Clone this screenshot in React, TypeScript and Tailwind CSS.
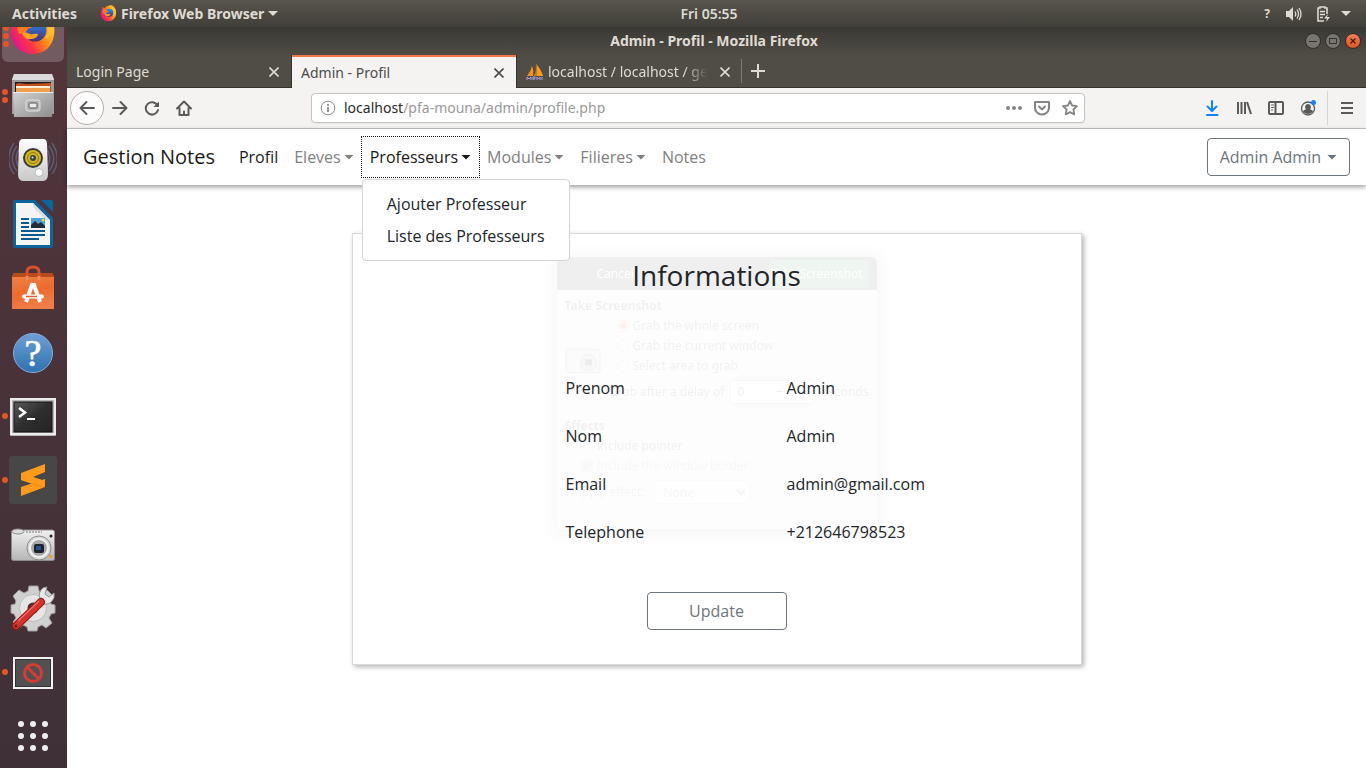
import type { ReactNode } from "react";

const UI_FONT = "font-['Noto_Sans','Open_Sans',sans-serif]";

function Firefox({ className }: { className: string }) {
  return (
    <svg viewBox="0 0 48 48" className={className} aria-hidden="true">
      <defs>
        <linearGradient id="fxBody" x1="0.95" y1="0.25" x2="0.1" y2="0.8">
          <stop offset="0" stopColor="#ffd52a" />
          <stop offset="0.4" stopColor="#ff8a16" />
          <stop offset="0.7" stopColor="#ff3647" />
          <stop offset="1" stopColor="#e31587" />
        </linearGradient>
        <linearGradient id="fxGlobe" x1="0" y1="0" x2="0" y2="1">
          <stop offset="0" stopColor="#0a9df0" />
          <stop offset="0.5" stopColor="#3a5fb8" />
          <stop offset="1" stopColor="#4a2f78" />
        </linearGradient>
      </defs>
      <path
        d="M5 14c0-4 1-7 2-9 2 1 4 3 5 4 4-3 6-5 10-6 4-2 8-2 8-2 8 2 10 5 12 10 3 3 4 10 3 16-1 11-10 19-21 19S3 38 2 27c-.5-5 .5-9 3-13z"
        fill="url(#fxBody)"
      />
      <circle cx="26" cy="22" r="11.500" fill="url(#fxGlobe)" />
      <path d="M7 16c3-5 7-6 10-5 0 3 1 4 3 5 2 0 4 1 4 2-1 2-4 2-5 3l-3 4-6 1z" fill="#ff7a1e" />
      <path d="M13 25c3-1 6 0 8 1 3 1 5-1 8 0 0 3-4 5-8 5-3 1-6-1-8-6z" fill="#ffa21c" />
      <path d="M30 1c6 5 9 10 9 17 1 5-1 10-4 13 7-2 11-8 10-15C43 9 38 3 30 1z" fill="#ffbd2b" />
    </svg>
  );
}

function Icon({ children }: { children: ReactNode }) {
  return (
    <svg viewBox="0 0 48 48" className="size-12 shrink-0" aria-hidden="true">
      {children}
    </svg>
  );
}

const files = (
  <Icon>
    <defs>
      <linearGradient id="metal" x1="0" y1="0" x2="1" y2="1">
        <stop offset="0" stopColor="#d2d2d2" />
        <stop offset="1" stopColor="#8d8d8d" />
      </linearGradient>
    </defs>
    <path d="M5 2h38l2 5v35H3V7z" fill="#9c9c9c" />
    <path d="M5 2h38l2 6H3z" fill="#dadada" />
    <path d="M6 10h36v10H6z" fill="#1e1e1e" />
    <path d="M9 11l9 1 24-1v9H7v-8z" fill="#c4501b" />
    <path d="M7 14h34v3H7z" fill="#fff0d8" />
    <path d="M7 16h34v4H7z" fill="#eea04c" />
    <path d="M4 20h40l-1 25H5z" fill="url(#metal)" />
    <path d="M4 20h40v1H4z" fill="#ededed" />
    <rect x="17" y="28" width="14" height="11" rx="2" fill="#b7b7b7" stroke="#e2e2e2" />
    <rect x="20" y="31" width="8" height="5" rx="1" fill="#ececec" stroke="#555" />
  </Icon>
);

const rhythmbox = (
  <Icon>
    <defs>
      <linearGradient id="speaker" x1="0" y1="0" x2="0" y2="1">
        <stop offset="0" stopColor="#fff" />
        <stop offset="1" stopColor="#c9c9c9" />
      </linearGradient>
    </defs>
    <g fill="none" stroke="#6d83b4" strokeWidth="1.500" opacity="0.5">
      <path d="M8 10C2 18 2 27 8 35M40 10c6 8 6 17 0 25" />
      <path d="M5 7C-2 17-2 29 5 38M43 7c7 10 7 22 0 31M11 12c-5 7-5 14 0 21M37 12c5 7 5 14 0 21" />
    </g>
    <path d="M14 3h20q4 0 4 5l1 30q0 7-5 7H14q-5 0-5-7l1-30q0-5 4-5z" fill="url(#speaker)" />
    <circle cx="24" cy="22" r="10" fill="#3a3a38" />
    <circle cx="24" cy="22" r="8" fill="#d2b71e" />
    <circle cx="24" cy="22" r="5.500" fill="none" stroke="#8c7a12" />
    <circle cx="24" cy="22" r="3" fill="#35424c" />
    <circle cx="23.500" cy="21.500" r="1" fill="#d9e4ec" />
    <circle cx="30" cy="36.500" r="4" fill="#fafafa" stroke="#b9b9b9" />
    <path d="M15 35h3v4h-3z" fill="none" stroke="#ccc" />
  </Icon>
);

const writer = (
  <Icon>
    <path d="M6 0h20l18 18v28q0 2-2 2H6q-2 0-2-2V2q0-2 2-2z" fill="#0f639c" />
    <path d="M32 0h10q2 0 2 2v10z" fill="#0369a3" />
    <path d="M7 3h17l17 17v25H7z" fill="#f4f4f4" />
    <path d="M24 3l17 17h-4L24 7z" fill="#d7dde2" />
    <path d="M12 19h8M12 23h8M12 27h8M12 31h24M12 35h24M12 39h18" stroke="#0b5a90" strokeWidth="2" />
    <rect x="22" y="18" width="14" height="10" fill="#4aa3d6" />
    <path d="M22 28v-3l4-4 3 3 3-2 4 4v2z" fill="#1e2d38" />
    <circle cx="34" cy="20" r="1.500" fill="#f4d24a" />
  </Icon>
);

const software = (
  <Icon>
    <defs>
      <linearGradient id="bag" x1="0" y1="0" x2="0.3" y2="1">
        <stop offset="0" stopColor="#e98a4b" />
        <stop offset="0.6" stopColor="#ee6a2c" />
        <stop offset="1" stopColor="#ef7d47" />
      </linearGradient>
    </defs>
    <path d="M5 9h38l2 4v32H3V13z" fill="url(#bag)" />
    <path d="M5 9h38l2 4H3z" fill="#b94a1b" />
    <path d="M18 15V8q0-5 6-5t6 5v7" fill="none" stroke="#d9512a" strokeWidth="3" />
    <path d="M18 12v4M30 12v4" stroke="#f08a5c" strokeWidth="3" />
    <path d="M17 38l6-17h2l6 17" fill="none" stroke="#fff" strokeWidth="4" />
    <path d="M15 32.500h18" stroke="#fff" strokeWidth="4" strokeLinecap="round" />
    <path d="M17 32.500h11" stroke="#e4602a" strokeWidth="1.500" />
  </Icon>
);

const help = (
  <Icon>
    <defs>
      <linearGradient id="helpFill" x1="0" y1="0" x2="0" y2="1">
        <stop offset="0" stopColor="#6f9fd6" />
        <stop offset="1" stopColor="#2d72ae" />
      </linearGradient>
    </defs>
    <circle cx="24" cy="25" r="19.500" fill="url(#helpFill)" stroke="#88aed9" />
    <text x="24" y="38" textAnchor="middle" fontSize="38" fontFamily="Liberation Serif, serif" fill="#fff" stroke="#fff" strokeWidth="0.700">
      ?
    </text>
  </Icon>
);

const terminal = (
  <Icon>
    <defs>
      <linearGradient id="screen" x1="0" y1="0" x2="1" y2="1">
        <stop offset="0" stopColor="#5a5a5a" />
        <stop offset="0.5" stopColor="#2e2e2e" />
        <stop offset="1" stopColor="#242424" />
      </linearGradient>
    </defs>
    <rect x="1" y="6" width="46" height="38" rx="1" fill="#b5b5b5" />
    <rect x="2" y="7" width="44" height="35" fill="none" stroke="#ececec" strokeWidth="2" />
    <rect x="5" y="10" width="38" height="30" fill="url(#screen)" stroke="#111" />
    <path d="M10 16l6 4.500-6 4.500" fill="none" stroke="#fff" strokeWidth="2.500" />
    <path d="M18 27h8" stroke="#fff" strokeWidth="2" />
  </Icon>
);

const sublime = (
  <Icon>
    <rect width="48" height="48" rx="3" fill="#474747" />
    <path d="M12 31l24-8v8l-24 9z" fill="#ff9a1c" />
    <path d="M12 17l12 4 12 4v5l-4 1-20-7z" fill="#e07f0c" />
    <path d="M12 17l24-9v8l-12 5 12 4v4l-2 2-22-7z" fill="#ff9a1c" />
  </Icon>
);

const camera = (
  <Icon>
    <defs>
      <linearGradient id="cam" x1="0" y1="0" x2="0" y2="1">
        <stop offset="0" stopColor="#f1f1f1" />
        <stop offset="1" stopColor="#b5b5b5" />
      </linearGradient>
    </defs>
    <rect x="2.500" y="10" width="43" height="30.500" rx="2" fill="url(#cam)" stroke="#8c8c8c" />
    <ellipse cx="9" cy="11.500" rx="6" ry="2.500" fill="#ddd" stroke="#888" />
    <path d="M17 12h16" stroke="#777" strokeDasharray="2 1" />
    <circle cx="30" cy="28" r="12" fill="#d9d9d9" stroke="#8a8a8a" />
    <circle cx="30" cy="28" r="9" fill="#a9a9a9" stroke="#f2f2f2" strokeWidth="2" />
    <rect x="25" y="24" width="10" height="9" rx="2" fill="#1c232d" />
    <rect x="27" y="26" width="5" height="4" fill="#24518f" />
    <circle cx="42" cy="16" r="1.500" fill="#222" />
    <rect x="40" y="35" width="3" height="3" fill="#efa12c" />
  </Icon>
);

const settings = (
  <Icon>
    <path
      d="M20 2h9l1 5 4 2 4-3 6 6-3 5 1 3 4 1v8l-4 1-2 4 3 5-6 5-4-3-4 2-1 4h-9l-1-4-4-2-4 3-6-6 3-4-2-4-3-1v-8l4-1 1-3-3-5 6-6 5 3 4-2z"
      fill="#d0d0d0"
      stroke="#9d9d9d"
    />
    <circle cx="24" cy="24" r="13.500" fill="#e6e6e6" stroke="#bdbdbd" />
    <circle cx="24" cy="24" r="5.500" fill="#493339" />
    <path d="M33 17q-5-5-1-11 2-3 6-3l-2 7 4 3 5-4q1 5-2 8-3 4-9 3z" fill="#e9e9e9" stroke="#969696" />
    <path d="M7 42L32 18" stroke="#8d1813" strokeWidth="8" strokeLinecap="round" />
    <path d="M7 42L32 18" stroke="#d8322c" strokeWidth="6" strokeLinecap="round" />
    <path d="M9 37L30 17" stroke="#ef6d63" strokeWidth="1.500" />
    <circle cx="7" cy="42" r="1.500" fill="#6b1713" />
  </Icon>
);

const blocked = (
  <Icon>
    <rect x="4" y="9" width="40" height="32" fill="#f2f2f2" />
    <rect x="6.500" y="11.500" width="35" height="27" fill="#515151" stroke="#333" />
    <circle cx="24" cy="25" r="8.500" fill="none" stroke="#d83a34" strokeWidth="3" />
    <path d="M18 19l12 12" stroke="#d83a34" strokeWidth="3" />
  </Icon>
);

const grid = (
  <Icon>
    {[12, 24, 36].map((y) => [12, 24, 36].map((x) => <circle key={x + "-" + y} cx={x} cy={y} r="3" fill="#eee" />))}
  </Icon>
);

const dockItems = [
  { name: "Files", icon: files, dots: 2 },
  { name: "Rhythmbox", icon: rhythmbox, dots: 0 },
  { name: "Writer", icon: writer, dots: 0 },
  { name: "Software", icon: software, dots: 0 },
  { name: "Help", icon: help, dots: 0 },
  { name: "Terminal", icon: terminal, dots: 1 },
  { name: "Sublime Text", icon: sublime, dots: 1 },
  { name: "Screenshot", icon: camera, dots: 0 },
  { name: "Settings", icon: settings, dots: 0 },
  { name: "Blocked window", icon: blocked, dots: 1 },
  { name: "Show applications", icon: grid, dots: 0 },
];

function Dots({ count }: { count: number }) {
  return (
    <span className="flex w-[9px] shrink-0 flex-col items-center gap-0.5 pl-px">
      {Array.from({ length: count }, (_, i) => (
        <span key={i} className="size-1.5 rounded-full bg-[#e95420]" />
      ))}
    </span>
  );
}

function Dock() {
  return (
    <nav aria-label="Dock" className="flex w-[67px] shrink-0 flex-col bg-linear-to-b from-[#52353b] to-[#3f3037]">
      <div className="flex h-[37px] flex-col justify-end overflow-hidden">
        <button aria-label="Firefox" className="flex h-16 shrink-0 items-center py-0.5">
          <span className="mr-[3px] ml-0.5 flex h-full flex-1 items-center rounded-md bg-[#735c61]">
            <span className="flex w-[7px] flex-col items-center gap-0.5">
              {[0, 1, 2, 3].map((i) => (
                <span key={i} className="size-1.5 rounded-full bg-[#e95420]" />
              ))}
            </span>
            <Firefox className="size-12 shrink-0" />
          </span>
        </button>
      </div>
      {dockItems.map((item) => (
        <button key={item.name} aria-label={item.name} className="flex h-16 shrink-0 items-center">
          <Dots count={item.dots} />
          {item.icon}
        </button>
      ))}
    </nav>
  );
}

function SystemBar() {
  return (
    <header className="flex h-[27px] items-center bg-linear-to-b from-[#57554d] to-[#413f39] text-sm font-bold whitespace-nowrap text-[#dfdbd2]">
      <div className="flex grow basis-[67px] items-center pl-3">
        <button className="w-[88px] text-left">Activities</button>
        <button className="flex items-center gap-1">
          <Firefox className="size-[17px]" />
          Firefox Web Browser
          <svg viewBox="0 0 10 5" className="h-[5px] w-2.5" aria-hidden="true">
            <path d="M0 0h10L5 5z" fill="currentColor" />
          </svg>
        </button>
      </div>
      <span className="font-semibold">Fri 05:55</span>
      <div className="flex grow basis-0 items-center justify-end gap-2.5 pr-[15px]">
        <span className="mr-1.5 text-xs">?</span>
        <svg viewBox="0 0 16 14" className="mr-1 h-3.5 w-4" aria-label="Volume">
          <path d="M0 4h3l4-4v14L3 10H0z" fill="currentColor" />
          <path d="M9 4.500q1.500 2.500 0 5M11 2.500q3 4.500 0 9M13 1q4 6 0 12" fill="none" stroke="currentColor" strokeWidth="1.300" />
        </svg>
        <svg viewBox="0 0 15 16" className="h-4 w-[15px]" aria-label="Battery">
          <path d="M8 15H2V2h2V1h5v1h2v6M4 5.500h5M4 8.500h5M4 11.500h3" fill="none" stroke="currentColor" strokeWidth="1.600" />
          <path d="M12 8l-4 4.500h3l-1 3.500 4-5h-3z" fill="currentColor" />
        </svg>
        <svg viewBox="0 0 10 5" className="h-[5px] w-2.5" aria-hidden="true">
          <path d="M0 0h10L5 5z" fill="currentColor" />
        </svg>
      </div>
    </header>
  );
}

function TitleBar() {
  const dot = "flex size-4 items-center justify-center rounded-full border border-[#2e2d29]";
  return (
    <div className="flex h-7 items-center bg-linear-to-b from-[#3a3934] to-[#4f4c45] text-sm font-bold text-[#dfdbd2]">
      <div className="grow basis-0" />
      <h1>Admin - Profil - Mozilla Firefox</h1>
      <div className="flex grow basis-0 items-center justify-end gap-1 pr-[5px]">
        <button aria-label="Minimize" className={dot + " bg-[#77756e]"}>
          <svg viewBox="0 0 8 8" className="size-2"><path d="M0 4.500h8" stroke="#33322e" /></svg>
        </button>
        <button aria-label="Maximize" className={dot + " bg-[#77756e]"}>
          <svg viewBox="0 0 8 8" className="size-2"><path d="M.5 1.500h7v5h-7z" fill="none" stroke="#33322e" /></svg>
        </button>
        <button aria-label="Close" className={dot + " bg-linear-to-b from-[#f37e5a] to-[#e2511d]"}>
          <svg viewBox="0 0 8 8" className="size-2"><path d="M1.500 1.500l5 5m0-5l-5 5" stroke="#4a1c0c" strokeWidth="1.300" /></svg>
        </button>
      </div>
    </div>
  );
}

function CloseTab() {
  return (
    <button aria-label="Close tab" className="shrink-0">
      <svg viewBox="0 0 10 10" className="size-2.5" aria-hidden="true">
        <path d="M.5.5l9 9m0-9l-9 9" stroke="currentColor" strokeWidth="1.600" />
      </svg>
    </button>
  );
}

function TabStrip() {
  const tab = "flex items-center justify-between pt-0.5 pr-3 pl-[9px]";
  return (
    <div className="flex h-[33px] items-stretch border-b border-[#33322e] bg-[#504d46] text-sm text-[#dfdbd2]">
      <div className={tab + " w-[225px] border-r border-[#33322e]"}>
        <span>Login Page</span>
        <CloseTab />
      </div>
      <div className={tab + " -mb-px w-56 bg-[#f4f3f2] text-[#4c4c4c] shadow-[inset_0_2px_#f07746]"}>
        <span>Admin - Profil</span>
        <CloseTab />
      </div>
      <div className={tab + " w-[225px] border-l border-[#33322e]"}>
        <svg viewBox="0 0 18 17" className="mr-1 h-[17px] w-[18px] shrink-0" aria-hidden="true">
          <path d="M1 12Q5 7 6 2q2 4 1 10z" fill="#f0912a" />
          <path d="M8 12q3-6 2-12 5 5 7 12z" fill="#f79c1e" />
          <path d="M10 1v11" stroke="#8a5a24" />
          <path d="M1 16v-3l2 2 2-2v3m2 0v-3h2v2h-2m4 1v-3l1.500 2 1.500-2v3m2 0v-3" fill="none" stroke="#a3a5d6" />
        </svg>
        <span className="mr-3 flex-1 mask-r-from-85% whitespace-nowrap">localhost / localhost / ge</span>
        <CloseTab />
      </div>
      <button aria-label="New tab" className="my-1 flex w-8 items-center justify-center border-l border-[#7d7a72]">
        <svg viewBox="0 0 14 14" className="size-3.5"><path d="M7 0v14M0 7h14" stroke="currentColor" strokeWidth="2" /></svg>
      </button>
    </div>
  );
}

function Tool({ label, children }: { label: string; children: ReactNode }) {
  return (
    <button aria-label={label} className="flex h-8 w-8 shrink-0 items-center justify-center">
      <Glyph>{children}</Glyph>
    </button>
  );
}

function Glyph({ children }: { children: ReactNode }) {
  return (
    <svg viewBox="0 0 16 16" className="size-4" fill="none" stroke="currentColor" strokeWidth="2" strokeLinecap="round" strokeLinejoin="round" aria-hidden="true">
      {children}
    </svg>
  );
}

function Toolbar() {
  return (
    <div className="flex h-[41px] items-center border-b border-[#c8c6c3] bg-[#f4f3f2] pr-[3px] pl-[3px] text-[#5a5a59]">
      <button aria-label="Back" className="flex size-[34px] shrink-0 items-center justify-center rounded-full border border-[#b0afad] bg-[#fcfcfc]">
        <Glyph><path d="M15 8H1.500M7.500 2l-6 6 6 6" /></Glyph>
      </button>
      <Tool label="Forward"><path d="M1 8h13.500M8.500 2l6 6-6 6" /></Tool>
      <Tool label="Reload">
        <path d="M13.500 5.500A6.200 6.200 0 1 0 14 10" />
        <path d="M15 1.500v5.500H9.500z" fill="currentColor" stroke="none" />
      </Tool>
      <Tool label="Home">
        <path d="M1 8.500l7-7 7 7M3.500 8v7h9V8M8 15v-3.500" />
      </Tool>
      <div className="mx-[111px] flex h-[30px] flex-1 items-center rounded-sm border border-[#c5c3c0] bg-white pr-1.5 pl-2 shadow-xs">
        <svg viewBox="0 0 16 16" className="mr-2 size-4 shrink-0 text-[#868685]" fill="none" stroke="currentColor" aria-hidden="true">
          <circle cx="8" cy="8" r="6.800" />
          <path d="M8 7v5M8 4v1.800" strokeWidth="1.800" />
        </svg>
        <span className="flex-1 text-sm text-[#9a9a9a]">
          <span className="text-[#2b2b2b]">localhost</span>/pfa-mouna/admin/profile.php
        </span>
        <div className="flex items-center gap-3 text-[#858584]">
          <button aria-label="Page actions">
            <Glyph>
              <g fill="currentColor" stroke="none">
                <circle cx="2" cy="8" r="2" /><circle cx="8" cy="8" r="2" /><circle cx="14" cy="8" r="2" />
              </g>
            </Glyph>
          </button>
          <button aria-label="Save to Pocket">
            <Glyph><path d="M1 2h14v6a7 6.500 0 0 1-14 0zM5 6.500l3 3 3-3" /></Glyph>
          </button>
          <button aria-label="Bookmark this page">
            <Glyph><path strokeWidth="1.800" d="M8 1l2.100 4.500 4.900.6-3.600 3.400.9 4.900L8 12l-4.300 2.400.9-4.900L1 6.100l4.900-.6z" /></Glyph>
          </button>
        </div>
      </div>
      <span className="flex text-[#0a84ff]">
        <Tool label="Downloads"><path d="M8 1v9.500M3.500 6.500L8 11l4.500-4.500M3 15h10.500" /></Tool>
      </span>
      <Tool label="Library"><path strokeLinecap="butt" d="M2 2v12M5.500 2v12M9 2v12M11 2l4 12" /></Tool>
      <Tool label="Sidebars"><path d="M2 2h12q1 0 1 1v10q0 1-1 1H2q-1 0-1-1V3q0-1 1-1zM7.500 2v12" /><path strokeWidth="1" d="M3.500 5h2M3.500 7.500h2M3.500 10h1" /></Tool>
      <Tool label="Account">
        <circle cx="8" cy="8.500" r="6.500" strokeWidth="1.300" />
        <path stroke="none" fill="currentColor" d="M8 4a3 3 0 0 1 2 5.200q3 .8 3 2.300-2 2.500-5 2.500t-5-2.500q0-1.500 3-2.300A3 3 0 0 1 8 4z" />
        <circle cx="13.500" cy="2.500" r="2.500" fill="#0a84ff" stroke="none" />
      </Tool>
      <span className="mx-[3px] h-[34px] w-px bg-[#d8d6d3]" />
      <Tool label="Menu"><path strokeLinecap="butt" d="M2 3h12M2 8h12M2 13h12" /></Tool>
    </div>
  );
}

function Caret() {
  return (
    <svg viewBox="0 0 10 5" className="h-[5px] w-2.5" aria-hidden="true">
      <path d="M.5 0h9L5 4.600z" fill="currentColor" />
    </svg>
  );
}

function SiteNav() {
  const link = "flex h-10 items-center gap-[3px] px-2";
  const muted = " text-[#808080]";
  return (
    <nav aria-label="Site" className="relative z-20 flex h-14 items-center bg-white px-4 shadow-[0_2px_5px_rgba(0,0,0,0.4)]">
      <a href="#" className="mr-4 text-xl text-[#191919]">Gestion Notes</a>
      <a href="#" className={link + " text-[#191919]"}>Profil</a>
      <a href="#" className={link + muted}>Eleves <Caret /></a>
      <div className="relative">
        <a href="#" className={link + " text-[#191919] outline outline-dotted outline-[#111]"}>Professeurs <Caret /></a>
        <ul className="absolute top-full left-0 mt-0.5 rounded-sm border border-[#d3d3d3] bg-white py-2 whitespace-nowrap text-[#212529]">
          <li><a href="#" className="block px-6 py-1">Ajouter Professeur</a></li>
          <li><a href="#" className="block px-6 py-1">Liste des Professeurs</a></li>
        </ul>
      </div>
      <a href="#" className={link + muted}>Modules <Caret /></a>
      <a href="#" className={link + muted}>Filieres <Caret /></a>
      <a href="#" className={link + muted}>Notes</a>
      <button className="ml-auto flex h-[38px] items-center gap-1.5 rounded-sm border border-[#6c757d] px-3 text-[#6c757d]">
        Admin Admin <Caret />
      </button>
    </nav>
  );
}

/* Screenshot dialog, almost fully faded out. */
function FadingDialog() {
  return (
    <div className={"pointer-events-none absolute top-[23px] left-1/2 flex h-[272px] w-80 -translate-x-1/2 flex-col rounded-t-md bg-[#eee] text-xs text-[#444] opacity-[0.07] shadow-[0_2px_16px_6px_rgba(0,0,0,0.4)] " + UI_FONT}>
      <div className="flex h-[33px] items-center justify-between rounded-t-md bg-[#33322e] pr-2 pl-10 text-white">
        <button tabIndex={-1}>Cancel</button>
        <button tabIndex={-1} className="h-7 w-[100px] rounded-sm bg-[#2f8f4d] text-right whitespace-nowrap"><span className="pr-1.5">Take Screenshot</span></button>
      </div>
      <div className="flex flex-col pr-2 pl-2">
        <strong className="pt-2 pb-0.5 leading-4">Take Screenshot</strong>
        <div className="flex h-[60px] items-end gap-4">
          <svg viewBox="0 0 40 30" className="mb-0.5 h-7 w-9" aria-hidden="true">
            <rect x="1" y="3" width="38" height="26" rx="2" fill="#ccc" stroke="#666" />
            <circle cx="26" cy="18" r="9" fill="#aaa" stroke="#555" />
            <rect x="22" y="14" width="8" height="7" fill="#111" />
          </svg>
          <div className="flex flex-col">
            <label className="flex h-5 items-center gap-1"><input type="radio" name="area" tabIndex={-1} defaultChecked className="size-3 accent-[#e95420]" />Grab the whole screen</label>
            <label className="flex h-5 items-center gap-1"><input type="radio" name="area" tabIndex={-1} className="size-3 appearance-none rounded-full border border-[#aaa]" />Grab the current window</label>
            <label className="flex h-5 items-center gap-1"><input type="radio" name="area" tabIndex={-1} className="size-3 appearance-none rounded-full border border-[#aaa]" />Select area to grab</label>
          </div>
        </div>
        <label className="mt-1 flex h-6 items-center justify-end gap-1.5 whitespace-nowrap">
          Grab after a delay of
          <span className="flex h-6 w-[86px] items-center rounded-sm border border-[#aaa] bg-white">
            <input defaultValue="0" tabIndex={-1} className="w-9 pl-1.5 text-[#444]" />
            <span className="flex-1 text-center">−</span>
            <span className="flex-1 text-center">+</span>
          </span>
          seconds
        </label>
        <strong className="pt-3 leading-5">Effects</strong>
        <label className="flex h-5 items-center gap-1 pl-4"><input type="checkbox" tabIndex={-1} className="size-3 appearance-none rounded-sm border border-[#ccc]" />Include pointer</label>
        <label className="flex h-5 items-center gap-1 pl-4 opacity-50"><input type="checkbox" tabIndex={-1} defaultChecked className="size-3 accent-[#999]" />Include the window border</label>
        <label className="flex h-8 items-center gap-2.5 pl-2.5 opacity-60">
          Apply effect:
          <select tabIndex={-1} className="h-6 w-24 rounded-sm border border-[#aaa] bg-white pl-1"><option>None</option></select>
        </label>
      </div>
    </div>
  );
}

const rows = [
  ["Prenom", "Admin"],
  ["Nom", "Admin"],
  ["Email", "admin@gmail.com"],
  ["Telephone", "+212646798523"],
];

function ProfileCard() {
  return (
    <section className="relative mx-auto mt-12 mb-8 flex w-full max-w-[730px] flex-col items-center border border-[#d9d9d9] bg-white pt-6 pb-[34px] text-[#212529] shadow-[2px_2px_5px_rgba(0,0,0,0.3)]">
      <FadingDialog />
      <h2 className="relative text-[28px] leading-[34px]">Informations</h2>
      <table className="relative mt-[72px] ml-[116px] w-[442px] table-fixed text-left">
        <tbody>
          {rows.map(([name, value]) => (
            <tr key={name} className="h-12">
              <th scope="row" className="px-3 font-normal">{name}</th>
              <td className="px-3 whitespace-nowrap">{value}</td>
            </tr>
          ))}
        </tbody>
      </table>
      <button className="relative mt-9 h-[38px] w-[140px] rounded-sm border border-[#6c757d] text-[#6c757d]">Update</button>
    </section>
  );
}

export default function App() {
  return (
    <div className={"flex min-h-screen flex-col bg-white " + UI_FONT}>
      <SystemBar />
      <div className="flex flex-1">
        <Dock />
        <div className="flex min-w-0 flex-1 flex-col">
          <TitleBar />
          <TabStrip />
          <Toolbar />
          <main className="flex-1 bg-white font-['Open_Sans','Noto_Sans',sans-serif] text-base">
            <SiteNav />
            <ProfileCard />
          </main>
        </div>
      </div>
    </div>
  );
}
